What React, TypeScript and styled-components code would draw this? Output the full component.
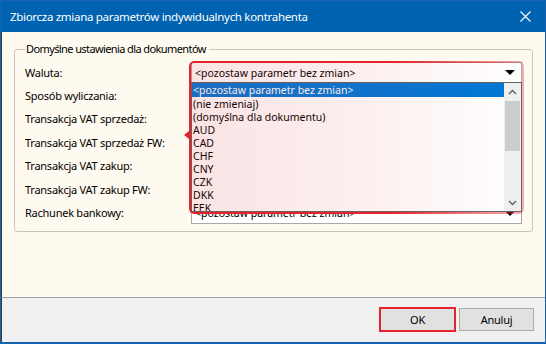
import React from 'react';
import styled, { createGlobalStyle } from 'styled-components';

const GlobalStyle = createGlobalStyle`
  html, body {
    margin: 0;
    padding: 0;
  }
  body {
    width: 546px;
    height: 344px;
    overflow: hidden;
    font-family: "Noto Sans", "Liberation Sans", sans-serif;
    font-size: 11px;
    letter-spacing: -0.25px;
    color: #000;
  }
  * {
    box-sizing: border-box;
  }
`;

const Window = styled.div`
  width: 546px;
  height: 344px;
  display: flex;
  flex-direction: column;
  border: 1px solid #1763b0;
  border-bottom-width: 2px;
  background: #0063b1;
`;

const TitleBar = styled.div`
  height: 31px;
  flex: none;
  display: flex;
  align-items: center;
  justify-content: space-between;
  padding: 0 14px 0 9px;
  color: #fff;
  font-size: 11.5px;
  letter-spacing: -0.3px;
`;

const CloseIcon = styled.svg`
  width: 11px;
  height: 11px;
`;

const Body = styled.div`
  flex: 1;
  background: #fffaef;
  padding: 9px 12px 0 12px;
  border-left: 1px solid #3a3a3a;
`;

const GroupBox = styled.fieldset`
  margin: 0;
  padding: 0 10px 6px 10px;
  border: 1px solid #c9c6bd;
  border-radius: 3px;
`;

const Legend = styled.legend`
  padding: 0 3px 0 1px;
  margin-left: 0;
  line-height: 16px;
  letter-spacing: -0.6px;
`;

const Form = styled.div`
  display: grid;
  grid-template-columns: 166px 1fr;
  grid-auto-rows: 23.4px;
  align-items: center;
  margin-top: 4px;
`;

const Label = styled.div`
  line-height: 16px;
  white-space: nowrap;
`;

const ComboWrap = styled.div`
  position: relative;
  height: 21px;
`;

const Combo = styled.div`
  height: 21px;
  border: 1px solid #aaa9a6;
  background: #fff;
  display: flex;
  align-items: center;
  justify-content: space-between;
  padding: 0 6px 0 3px;
  font-size: 10.5px;
  letter-spacing: 0;
  white-space: nowrap;
  overflow: hidden;
`;

const ComboText = styled.span`
  line-height: 14px;
`;

const Arrow = styled.span`
  width: 0;
  height: 0;
  border-left: 5px solid transparent;
  border-right: 5px solid transparent;
  border-top: 5px solid #000;
`;

const DropList = styled.div`
  position: absolute;
  left: 0;
  right: 0;
  top: 20px;
  height: 130px;
  border: 1px solid #646464;
  background: #fff;
  display: flex;
  overflow: hidden;
  z-index: 2;
`;

const Items = styled.div`
  flex: 1;
  font-size: 10.5px;
  letter-spacing: 0;
`;

const Item = styled.div<{ $selected?: boolean }>`
  height: 13px;
  line-height: 13px;
  padding: 1px 0 0 1px;
  white-space: nowrap;
  background: ${(p) => (p.$selected ? '#0078d7' : 'transparent')};
  color: ${(p) => (p.$selected ? '#fff' : '#000')};
  &:first-child {
    height: 14px;
  }
`;

const ScrollBar = styled.div`
  width: 17px;
  flex: none;
  background: #f0f0f0;
  display: flex;
  flex-direction: column;
  align-items: center;
`;

const ScrollButton = styled.div`
  height: 17px;
  width: 17px;
  display: flex;
  align-items: center;
  justify-content: center;
  flex: none;
`;

const ScrollTrack = styled.div`
  flex: 1;
  width: 17px;
  padding: 1px 1px 0 1px;
`;

const Thumb = styled.div`
  height: 50px;
  background: #cdcdcd;
`;

const Highlight = styled.div`
  position: absolute;
  left: -2px;
  right: -2px;
  top: -1px;
  height: 153px;
  border-radius: 5px;
  pointer-events: none;
  z-index: 3;
  background: linear-gradient(to right, rgba(214, 40, 40, 0.13), rgba(214, 40, 40, 0.07) 55%, rgba(214, 40, 40, 0));
  &::before {
    content: '';
    position: absolute;
    inset: 0;
    border-radius: 5px;
    padding: 2px;
    background: linear-gradient(to right, #e3242c 60%, rgba(227, 36, 44, 0.35));
    -webkit-mask: linear-gradient(#000 0 0) content-box, linear-gradient(#000 0 0);
    -webkit-mask-composite: xor;
    mask-composite: exclude;
  }
  &::after {
    content: '';
    position: absolute;
    left: -5px;
    top: 70px;
    border-top: 4px solid transparent;
    border-bottom: 4px solid transparent;
    border-right: 5px solid #e3242c;
  }
`;

const Footer = styled.div`
  height: 45px;
  flex: none;
  background: #f0f0f0;
  border-top: 1px solid #a0a0a0;
  border-left: 1px solid #3a3a3a;
  display: flex;
  justify-content: flex-end;
  align-items: flex-start;
  gap: 4px;
  padding: 10px 11px 0 0;
`;

const Button = styled.button<{ $marked?: boolean }>`
  width: 75px;
  height: 23px;
  background: #e1e1e1;
  border: 1px solid #adadad;
  font-family: "Noto Sans", "Liberation Sans", sans-serif;
  font-size: 11px;
  letter-spacing: -0.25px;
  color: #000;
  padding: 0;
  outline: ${(p) => (p.$marked ? '2px solid #e3242c' : 'none')};
  outline-offset: -1px;
`;

const Chevron: React.FC<{ up?: boolean }> = ({ up }) => (
  <svg width="9" height="6" viewBox="0 0 9 6">
    <path
      d={up ? 'M1 5 L4.5 1.5 L8 5' : 'M1 1 L4.5 4.5 L8 1'}
      fill="none"
      stroke="#606060"
      strokeWidth="1.4"
    />
  </svg>
);

const rows = [
  'Waluta:',
  'Sposób wyliczania:',
  'Transakcja VAT sprzedaż:',
  'Transakcja VAT sprzedaż FW:',
  'Transakcja VAT zakup:',
  'Transakcja VAT zakup FW:',
  'Rachunek bankowy:',
];

const options = [
  '<pozostaw parametr bez zmian>',
  '(nie zmieniaj)',
  '(domyślna dla dokumentu)',
  'AUD',
  'CAD',
  'CHF',
  'CNY',
  'CZK',
  'DKK',
  'EEK',
];

const App: React.FC = () => {
  return (
    <>
      <GlobalStyle />
      <Window>
        <TitleBar>
          <span>Zbiorcza zmiana parametrów indywidualnych kontrahenta</span>
          <CloseIcon viewBox="0 0 11 11">
            <path d="M0.5 0.5 L10.5 10.5 M10.5 0.5 L0.5 10.5" stroke="#fff" strokeWidth="1.1" />
          </CloseIcon>
        </TitleBar>
        <Body>
          <GroupBox>
            <Legend>Domyślne ustawienia dla dokumentów</Legend>
            <Form>
              {rows.map((label, i) => (
                <React.Fragment key={label}>
                  <Label>{label}</Label>
                  <ComboWrap>
                    <Combo>
                      <ComboText>&lt;pozostaw parametr bez zmian&gt;</ComboText>
                      <Arrow />
                    </Combo>
                    {i === 0 && (
                      <>
                        <DropList>
                          <Items>
                            {options.map((o, j) => (
                              <Item key={o} $selected={j === 0}>
                                {o}
                              </Item>
                            ))}
                          </Items>
                          <ScrollBar>
                            <ScrollButton>
                              <Chevron up />
                            </ScrollButton>
                            <ScrollTrack>
                              <Thumb />
                            </ScrollTrack>
                            <ScrollButton>
                              <Chevron />
                            </ScrollButton>
                          </ScrollBar>
                        </DropList>
                        <Highlight />
                      </>
                    )}
                  </ComboWrap>
                </React.Fragment>
              ))}
            </Form>
          </GroupBox>
        </Body>
        <Footer>
          <Button $marked>OK</Button>
          <Button>Anuluj</Button>
        </Footer>
      </Window>
    </>
  );
};

export default App;
